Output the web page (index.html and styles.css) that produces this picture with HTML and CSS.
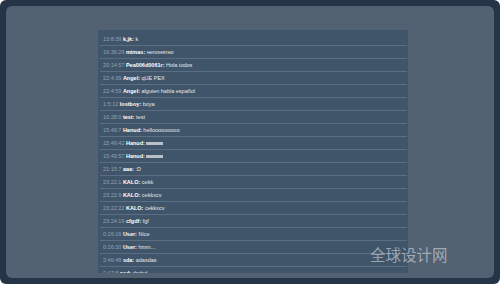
FILE: index.html
```html
<!DOCTYPE html>
<html lang="en">
<head>
    <meta charset="UTF-8">
    <title>Chat</title>
    <link rel="stylesheet" href="styles.css">
</head>
<body>
<!--Frame-->
<div class="frame">
    <div class="panel">
        <!--Chat log-->
        <div class="chat">
            <div class="row"><span class="time">13:8:39</span> <b>k,jk:</b> k</div>
            <div class="row"><span class="time">19:36:29</span> <b>mimas:</b> непонятно</div>
            <div class="row"><span class="time">20:14:57</span> <b>Pea006d0061r:</b> Hola todos</div>
            <div class="row"><span class="time">22:4:39</span> <b>Angel:</b> qUE PEX</div>
            <div class="row"><span class="time">22:4:59</span> <b>Angel:</b> alguien habla español</div>
            <div class="row"><span class="time">1:5:12</span> <b>lostboy:</b> boya</div>
            <div class="row"><span class="time">10:28:0</span> <b>test:</b> test</div>
            <div class="row"><span class="time">15:49:7</span> <b>Hanud:</b> hellooooooooo</div>
            <div class="row"><span class="time">15:49:42</span> <b>Hanud:</b> <span class="hidden"></span></div>
            <div class="row"><span class="time">15:49:57</span> <b>Hanud:</b> <span class="hidden"></span></div>
            <div class="row"><span class="time">21:15:7</span> <b>aaa:</b> :D</div>
            <div class="row"><span class="time">23:22:1</span> <b>KALO:</b> cekk</div>
            <div class="row"><span class="time">23:22:9</span> <b>KALO:</b> cekkxcv</div>
            <div class="row"><span class="time">23:22:22</span> <b>KALO:</b> cekkxcv</div>
            <div class="row"><span class="time">23:24:19</span> <b>cfgdf:</b> fgf</div>
            <div class="row"><span class="time">0:26:16</span> <b>User:</b> Nice</div>
            <div class="row"><span class="time">0:26:30</span> <b>User:</b> hmm...</div>
            <div class="row"><span class="time">2:46:48</span> <b>sda:</b> adasdas</div>
            <div class="row"><span class="time">0:47:8</span> <b>asd:</b> dsdsd</div>
        </div>
    </div>
    <!--Watermark-->
    <span class="watermark">全球设计网</span>
</div>
</body>
</html>
```
FILE: styles.css
```css
body {
    margin: 0;
    background: #ffffff;
    font-family: "Liberation Sans", Arial, sans-serif;
}
.frame {
    position: relative;
    width: 500px;
    height: 284px;
    box-sizing: border-box;
    padding: 6px 6px 6px 6px;
    background: #253446;
    border-radius: 6px;
}
.panel {
    height: 272px;
    box-sizing: border-box;
    padding-top: 24px;
    background: #536272;
    border-radius: 6px;
    overflow: hidden;
}
.chat {
    width: 310px;
    height: 243px;
    margin-left: 92px;
    box-sizing: border-box;
    padding-top: 3px;
    background: #405569;
    overflow: hidden;
}
.row {
    height: 12px;
    line-height: 12px;
    margin: 0 1px 0 2px;
    padding-left: 3px;
    border-bottom: 1px solid #5b6f84;
    font-size: 5.5px;
    color: #e4e9ee;
    white-space: nowrap;
}
.row b {
    color: #ffffff;
}
.time {
    color: #93a3b4;
}
.hidden {
    display: inline-block;
    width: 17px;
    height: 3px;
    background: #b7c0ca;
    filter: blur(0.6px);
    vertical-align: middle;
}
.watermark {
    position: absolute;
    left: 370px;
    top: 243px;
    font-family: "Noto Sans CJK SC", sans-serif;
    font-size: 15.5px;
    color: rgba(215, 220, 226, 0.6);
}
```
